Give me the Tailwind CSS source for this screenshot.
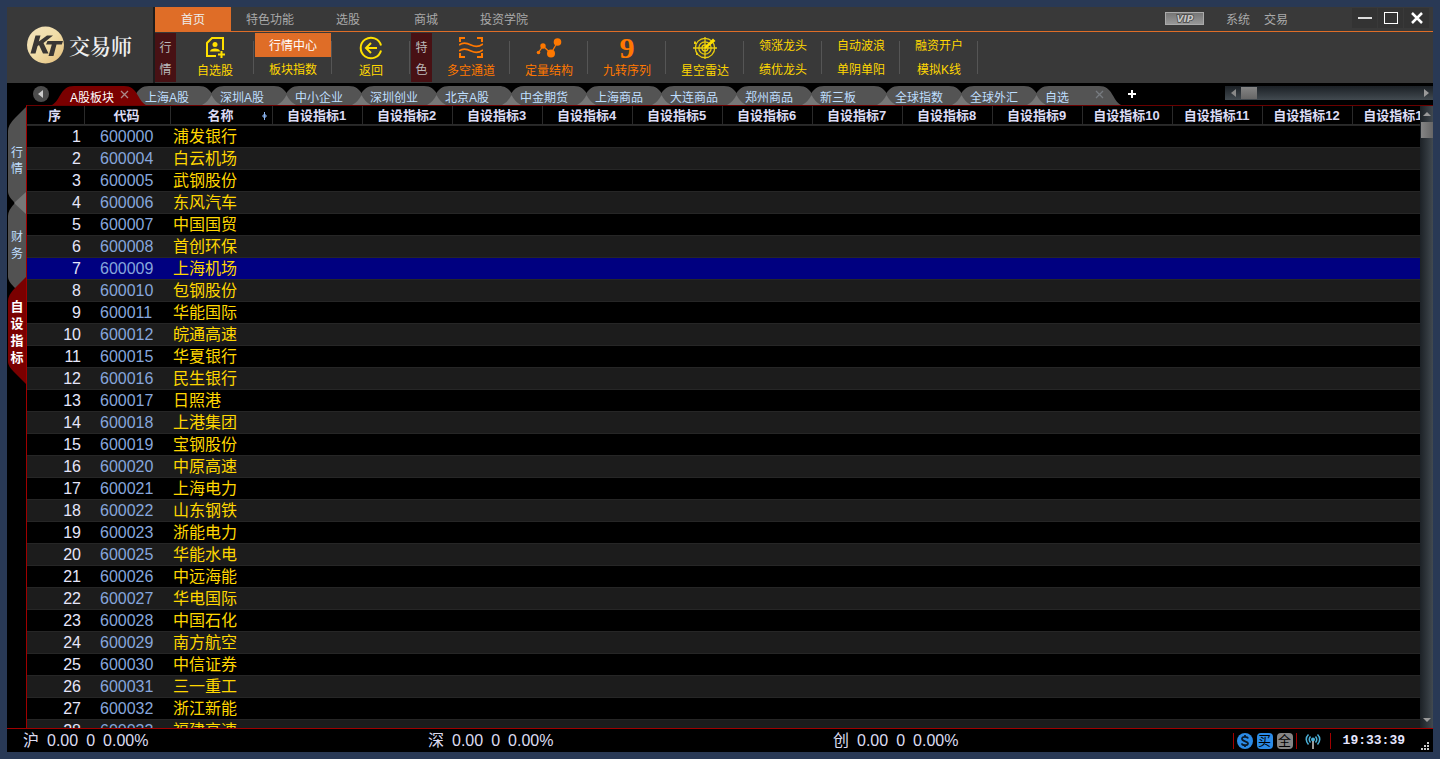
<!DOCTYPE html>
<html lang="zh-CN">
<head>
<meta charset="utf-8">
<title>交易师</title>
<script src="https://cdn.jsdelivr.net/npm/@tailwindcss/browser@4"></script>
</head>
<body class="h-screen overflow-hidden bg-[#293955] p-[7px] text-xs font-['Liberation_Sans','Noto_Sans_CJK_SC',sans-serif]">
<div class="flex h-full flex-col bg-black">

  <header class="flex h-[76px] shrink-0 bg-[#393939]">
    <div class="flex w-[148px] shrink-0 items-center border-r-2 border-[#1c1c1c] pl-5">
      <svg class="size-[38px] shrink-0" viewBox="0 0 38 38" aria-hidden="true">
        <defs><linearGradient id="gold" x1="0" x2="1" y1="0" y2="1"><stop offset="0" stop-color="#f3e3bd"/><stop offset=".5" stop-color="#f0dda8"/><stop offset="1" stop-color="#e3bd7a"/></linearGradient></defs>
        <circle cx="18.500" cy="19" r="18.500" fill="url(#gold)"/>
        <path d="M8.500 9.500h5l-1.700 6L20 9.500h6L16.500 17l5 10.500h-5.500l-4-8.500-1.500 1.200L8.500 27.500h-5z" fill="#393634"/>
        <path d="M20.500 15H36l-1.200 3.500h-5.300L26.500 30h-5l3.300-11.500H19z" fill="#393634"/>
      </svg>
      <h1 class="ml-1 text-[21px] font-semibold leading-7 text-[#efefef] font-['Noto_Serif_CJK_SC','Noto_Sans_CJK_SC',serif]">交易师</h1>
    </div>
    <div class="flex min-w-0 flex-1 flex-col">
      <div class="flex h-[25px] shrink-0 border-b border-[#df6d27] text-[#a9a9a9]">
        <nav class="flex">
          <button class="w-[76px] bg-[#df6d27] pt-0.5 text-[#eee]">首页</button>
          <button class="w-[78px] pt-0.5">特色功能</button>
          <button class="w-[78px] pt-0.5">选股</button>
          <button class="w-[78px] pt-0.5">商城</button>
          <button class="w-[78px] pt-0.5">投资学院</button>
        </nav>
        <div class="ml-auto flex items-center pr-1">
          <button class="mb-0.5 mr-[22px] h-[13px] w-[39px]" aria-label="VIP">
            <svg class="block h-[13px] w-[39px]" viewBox="0 0 39 13">
              <defs><linearGradient id="vip" x2="0" y2="1"><stop stop-color="#747474"/><stop offset="1" stop-color="#999"/></linearGradient></defs>
              <rect x=".5" y=".5" width="38" height="12" fill="url(#vip)" stroke="#aaa"/>
              <text x="20" y="10" text-anchor="middle" font-family="DejaVu Sans" font-size="9" font-weight="bold" font-style="italic" fill="#c8c8c8" stroke="#444" stroke-width="1.500" paint-order="stroke">VIP</text>
            </svg>
          </button>
          <button class="mr-[14px] pt-0.5">系统</button>
          <button class="mr-16 pt-0.5">交易</button>
          <div class="mb-0.5 flex h-5 gap-px">
            <button class="flex w-[25px] items-center justify-center bg-[#333]" aria-label="最小化"><svg class="size-4" viewBox="0 0 16 16"><path d="M1 8h14" stroke="#ddd" stroke-width="2"/></svg></button>
            <button class="flex w-[25px] items-center justify-center bg-[#333]" aria-label="最大化"><svg class="size-4" viewBox="0 0 16 16"><rect x="1.500" y="2.500" width="13" height="11" fill="none" stroke="#fff"/></svg></button>
            <button class="flex w-[25px] items-center justify-center bg-[#333]" aria-label="关闭"><svg class="size-4" viewBox="0 0 16 16"><path d="M3 3l10 10M13 3L3 13" stroke="#fff" stroke-width="2.500"/></svg></button>
          </div>
        </div>
      </div>

      <div class="flex flex-1 text-[#ffd700]">
        <div class="my-px flex w-[21px] flex-col justify-between bg-[#481114] pb-1 pt-[7px] text-center leading-4 text-[#bbb]"><span>行</span><span>情</span></div>
        <button class="flex w-[78px] flex-col items-center pt-1">
          <svg class="size-6" viewBox="0 0 24 24" fill="none" stroke="#ffe000" stroke-width="2"><path d="M13 20H4V7l5-5h11v12"/><circle cx="12" cy="8.500" r="2.500" fill="#ffe000" stroke="none"/><path d="M7 15.500c0-4 10-4 10 0z" fill="#ffe000" stroke="none"/><path d="M18.500 15v7M15 18.500h7"/></svg>
          <span class="mt-[3px] leading-4">自选股</span>
        </button>
        <div class="my-[9px] -ml-px w-px bg-[#555]"></div>
        <div class="flex w-[78px] flex-col items-center pt-px">
          <button class="h-6 w-[76px] bg-[#df6d27] pt-0.5 text-white">行情中心</button>
          <button class="h-6 w-[76px] pt-0.5">板块指数</button>
        </div>
        <div class="my-[9px] -ml-px w-px bg-[#555]"></div>
        <button class="flex w-[78px] flex-col items-center pt-1">
          <svg class="size-6" viewBox="0 0 24 24" fill="none" stroke="#ffe000" stroke-width="2"><path d="M22 9.500A10.300 10.300 0 1 0 22 14.500"/><path d="M18 12H7M12 7l-5 5 5 5"/></svg>
          <span class="mt-[3px] leading-4">返回</span>
        </button>
        <div class="my-[9px] -ml-px w-px bg-[#555]"></div>
        <div class="my-px ml-px flex w-[21px] flex-col justify-between bg-[#481114] pb-1 pt-[7px] text-center leading-4 text-[#bbb]"><span>特</span><span>色</span></div>
        <button class="flex w-[78px] flex-col items-center pt-1 text-[#ff7800]">
          <svg class="size-6" viewBox="0 0 24 24" fill="none" stroke="#ff7800" stroke-width="2"><path d="M1 6V2h5M18 2h5v4M1 17v4h5M18 21h5v-4"/><path d="M0 9c4-3 8-2 12 0s8 2 12-1M0 15c4-3 8-2 12 0s8 2 12-1" stroke-width="1.700"/></svg>
          <span class="mt-[3px] leading-4">多空通道</span>
        </button>
        <div class="my-[9px] -ml-px w-px bg-[#555]"></div>
        <button class="flex w-[78px] flex-col items-center pt-1 text-[#ff7800]">
          <svg class="h-6 w-6 overflow-visible" viewBox="0 0 24 24" fill="#ff7800" stroke="#ff7800"><path d="M1.500 16.500L6 10l8 7.500L20.500 6" fill="none" stroke-width="1.300"/><g stroke="none"><circle cx="1.500" cy="16.500" r="1.800"/><circle cx="6" cy="10" r="2.700"/><circle cx="14" cy="17.500" r="4"/><circle cx="20.500" cy="6" r="3.800"/></g></svg>
          <span class="mt-[3px] leading-4">定量结构</span>
        </button>
        <div class="my-[9px] -ml-px w-px bg-[#555]"></div>
        <button class="flex w-[78px] flex-col items-center pt-1 text-[#ff7800]">
          <span class="h-6 text-[30px] font-bold leading-6 font-['Liberation_Serif',serif]">9</span>
          <span class="mt-[3px] leading-4">九转序列</span>
        </button>
        <div class="my-[9px] -ml-px w-px bg-[#555]"></div>
        <button class="flex w-[78px] flex-col items-center pt-1">
          <svg class="size-6" viewBox="0 0 24 24" fill="none" stroke="#e8cc10" stroke-width="1.300"><circle cx="12" cy="12" r="9.700"/><circle cx="12" cy="12" r="6.200"/><circle cx="12" cy="12" r="3"/><path d="M12 1v22M0 12h24"/><path d="M12 12l8-8 1 1z" fill="#ffe000" stroke="#ffe000" stroke-width="2"/><path d="M2 5.500v2.500M4 17v2" stroke-width="2"/></svg>
          <span class="mt-[3px] leading-4">星空雷达</span>
        </button>
        <div class="my-[9px] -ml-px w-px bg-[#555]"></div>
        <div class="flex w-[78px] flex-col pt-px"><button class="h-6 pt-0.5">领涨龙头</button><button class="h-6 pt-0.5">绩优龙头</button></div>
        <div class="my-[9px] -ml-px w-px bg-[#555]"></div>
        <div class="flex w-[78px] flex-col pt-px"><button class="h-6 pt-0.5">自动波浪</button><button class="h-6 pt-0.5">单阴单阳</button></div>
        <div class="my-[9px] -ml-px w-px bg-[#555]"></div>
        <div class="flex w-[78px] flex-col pt-px"><button class="h-6 pt-0.5">融资开户</button><button class="h-6 pt-0.5">模拟K线</button></div>
        <div class="my-[9px] -ml-px w-px bg-[#555]"></div>
      </div>
    </div>
  </header>

  <div class="flex h-[22px] shrink-0 items-start pt-[3px]">
    <button class="ml-[26px] mr-[3px] size-4 shrink-0" aria-label="向左滚动"><svg class="size-4" viewBox="0 0 16 16"><circle cx="8" cy="8" r="8" fill="#4c4c4c"/><path d="M10 4v8L5 8z" fill="#ccc"/></svg></button>
    <div id="tabs" class="isolate flex h-[19px] shrink-0"></div>
    <button class="ml-[5px] mt-0.5 size-3 shrink-0" aria-label="添加"><svg class="size-3" viewBox="0 0 12 12"><path d="M6 2v8M2 6h8" stroke="#fff" stroke-width="2"/></svg></button>
    <div class="ml-auto flex h-[14px] w-[208px] items-center bg-linear-to-b from-[#1c2126] to-[#424a50]">
      <button class="flex w-4 justify-center" aria-label="左"><svg class="h-2 w-[5px]" viewBox="0 0 5 8"><path d="M5 0v8L0 4z" fill="#888"/></svg></button>
      <div class="h-3 w-4 bg-linear-to-b from-[#858585] to-[#666]"></div>
      <button class="ml-auto mr-1" aria-label="右"><svg class="h-2 w-[5px]" viewBox="0 0 5 8"><path d="M0 0v8l5-4z" fill="#999"/></svg></button>
    </div>
  </div>

  <main class="flex min-h-0 flex-1">
    <nav class="isolate w-[19px] shrink-0 pl-px pt-0.5 text-[#bfdfff]">
      <button class="relative block h-[85px] w-[18px]">
        <svg class="absolute left-0 top-0 -z-10 h-[107px] w-[18px]" viewBox="0 0 18 107"><path d="M18 0v107L6 95Q0 89 0 85V24Q0 18 7 11z" fill="#525252"/></svg>
        <span class="mx-auto mt-[22px] block w-3 leading-4">行情</span>
      </button>
      <button class="relative block h-[85px] w-[18px]">
        <svg class="absolute left-0 top-0 -z-10 h-[107px] w-[18px]" viewBox="0 0 18 107"><path d="M18 0v107L6 95Q0 89 0 85V24Q0 18 7 11z" fill="#525252"/><path d="M18 0v22L6 11z" fill="#777"/></svg>
        <span class="mx-auto mt-[22px] block w-3 leading-[17px]">财务</span>
      </button>
      <button class="relative block h-[107px] w-[18px] font-bold text-white">
        <svg class="absolute left-0 top-0 -z-10 h-[107px] w-[18px]" viewBox="0 0 18 107"><path d="M18 0v107L6 95Q0 89 0 85V24Q0 18 7 11z" fill="#7a0000"/></svg>
        <span class="mx-auto mt-0.5 block w-[13px] text-[13px] leading-[17px]">自设指标</span>
      </button>
    </nav>
    <section class="min-w-0 flex-1 overflow-hidden border-l border-t border-l-[#a00000] border-t-[#6a0000]">
      <table class="w-[1416px] table-fixed border-separate border-spacing-0">
        <colgroup><col class="w-[58px]"><col class="w-[86px]"><col class="w-[102px]"></colgroup>
        <thead><tr id="head" class="h-[19px] text-[13px] leading-4 text-[#dcdcf5]"></tr></thead>
        <tbody id="rows"></tbody>
      </table>
    </section>
    <div class="flex w-[13px] shrink-0 flex-col items-center border-t border-[#6a0000] bg-linear-to-r from-[#1c2126] to-[#424a50]">
      <button class="flex h-4 w-full items-center justify-center" aria-label="上"><svg class="h-1 w-2" viewBox="0 0 8 4"><path d="M0 4h8L4 0z" fill="#999"/></svg></button>
      <div class="h-4 w-3 self-end bg-linear-to-r from-[#858585] to-[#666]"></div>
      <button class="mt-auto flex h-4 w-full items-center justify-center" aria-label="下"><svg class="h-1 w-2" viewBox="0 0 8 4"><path d="M0 0h8L4 4z" fill="#999"/></svg></button>
    </div>
  </main>

  <footer class="flex h-6 shrink-0 border-t border-[#a00000] text-base leading-6 text-[#dcdcf0]">
    <div class="ml-4 flex w-[405px] gap-2"><span>沪</span><span>0.00</span><span>0</span><span>0.00%</span></div>
    <div class="flex w-[405px] gap-2"><span>深</span><span>0.00</span><span>0</span><span>0.00%</span></div>
    <div class="flex gap-2"><span>创</span><span>0.00</span><span>0</span><span>0.00%</span></div>
    <div class="ml-auto flex items-center">
      <div class="flex h-4 items-center gap-1 border-x border-[#a00000] px-[3px]">
        <button aria-label="资金"><svg class="size-4" viewBox="0 0 16 16"><circle cx="8" cy="8" r="8" fill="#2b8be6"/><path d="M11 5.500C10.500 3.500 5 3 5 5.800S11 8 11 10.500 5 12.500 4.800 10.300M8 2v2M8 12v2" fill="none" stroke="#0a1a2a" stroke-width="1.800"/></svg></button>
        <button class="size-4 rounded-sm bg-[#2b8be6] text-[13px] leading-4 text-black">买</button>
        <button class="size-4 rounded-sm bg-[#858585] text-[13px] leading-4 text-black">全</button>
      </div>
      <div class="flex h-4 w-[34px] items-center justify-center border-r border-[#a00000]">
        <svg class="size-4" viewBox="0 0 16 16" fill="none" stroke="#4bb0d8" stroke-width="1.500"><path d="M3.500 1.500Q-1 6 3.500 11.500M12.500 1.500Q17 6 12.500 11.500M5.500 3.500Q3 6.500 5.500 9.500M10.500 3.500Q13 6.500 10.500 9.500"/><circle cx="8" cy="6.500" r="2" fill="#4bb0d8" stroke="none"/><path d="M8 8v8" stroke="#ccc"/></svg>
      </div>
      <time class="ml-3 text-[13px] font-bold text-[#e6e6ff] font-['Liberation_Mono',monospace]">19:33:39</time>
      <svg class="mb-px ml-4 mr-[3px] size-[9px] self-end" viewBox="0 0 9 9" fill="#ccc" aria-hidden="true"><path d="M6 0h2v2H6zM3 3h2v2H3zM6 3h2v2H6zM0 6h2v2H0zM3 6h2v2H3zM6 6h2v2H6z"/></svg>
    </div>
  </footer>
</div>

<script>
  const tabs = ['A股板块','上海A股','深圳A股','中小企业','深圳创业','北京A股','中金期货','上海商品','大连商品','郑州商品','新三板','全球指数','全球外汇','自选'];
  const shape = 'M0 19C9 14 8 0 22 0H72C86 0 85 14 94 19Z';
  document.getElementById('tabs').innerHTML = tabs.map((t, i) => {
    const close = i === 0 || i === 13;
    return `<button class="relative w-[75px] text-left ${i === 0 ? 'z-10 text-white' : 'z-0 text-[#bfdfff]'}">
      <svg class="absolute left-0 top-0 h-[19px] w-[94px]" viewBox="0 0 94 19"><path d="${shape}" fill="${i === 0 ? '#7a0000' : '#545454'}"/>${i > 1 ? '<path d="M0 19Q6 16 9.500 9Q13 16 19 19z" fill="#777"/>' : ''}${close ? `<path d="M69 5l7 7M76 5l-7 7" stroke="${i ? '#777b80' : '#a88'}" stroke-width="1.300"/>` : ''}</svg>
      <span class="relative block whitespace-nowrap pl-[18px] pt-1 leading-4">${t}</span></button>`;
  }).join('') + '<span class="w-[19px]"></span>';

  const heads = ['序','代码','名称', ...Array.from({length: 13}, (_, i) => '自设指标' + (i + 1))];
  document.getElementById('head').innerHTML = heads.map((h, i) =>
    `<th class="overflow-hidden whitespace-nowrap border-b border-r border-[#2a2a2a] p-0 pr-0.5 pt-px text-center font-bold ${i === 2 ? 'relative' : ''}">${h}${i === 2 ? '<svg class="absolute right-[5px] top-[6px] h-2 w-[5px]" viewBox="0 0 5 8"><path d="M2.500 0v8M0 4h5M1 3h3M1 5h3" stroke="#8ab4f0"/></svg>' : ''}</th>`).join('');

  const stocks = [['600000','浦发银行'],['600004','白云机场'],['600005','武钢股份'],['600006','东风汽车'],['600007','中国国贸'],['600008','首创环保'],['600009','上海机场'],['600010','包钢股份'],['600011','华能国际'],['600012','皖通高速'],['600015','华夏银行'],['600016','民生银行'],['600017','日照港'],['600018','上港集团'],['600019','宝钢股份'],['600020','中原高速'],['600021','上海电力'],['600022','山东钢铁'],['600023','浙能电力'],['600025','华能水电'],['600026','中远海能'],['600027','华电国际'],['600028','中国石化'],['600029','南方航空'],['600030','中信证券'],['600031','三一重工'],['600032','浙江新能'],['600033','福建高速']];
  document.getElementById('rows').innerHTML = stocks.map(([c, n], i) =>
    `<tr class="h-[22px] text-base leading-5 ${i === 6 ? 'bg-[#000080]' : i % 2 ? 'bg-[#1c1c1c]' : 'bg-black'}">
      <td class="border-t border-[#262626] p-0 pr-1 text-right text-[#e6e6fa]">${i + 1}</td>
      <td class="border-t border-[#262626] p-0 pl-[15px] text-[#86a6dc]">${c}</td>
      <td class="border-t border-[#262626] p-0 pl-0.5 text-[#ffd700]">${n}</td>
      <td colspan="13" class="border-t border-[#262626] p-0"></td></tr>`).join('');
</script>
</body>
</html>
